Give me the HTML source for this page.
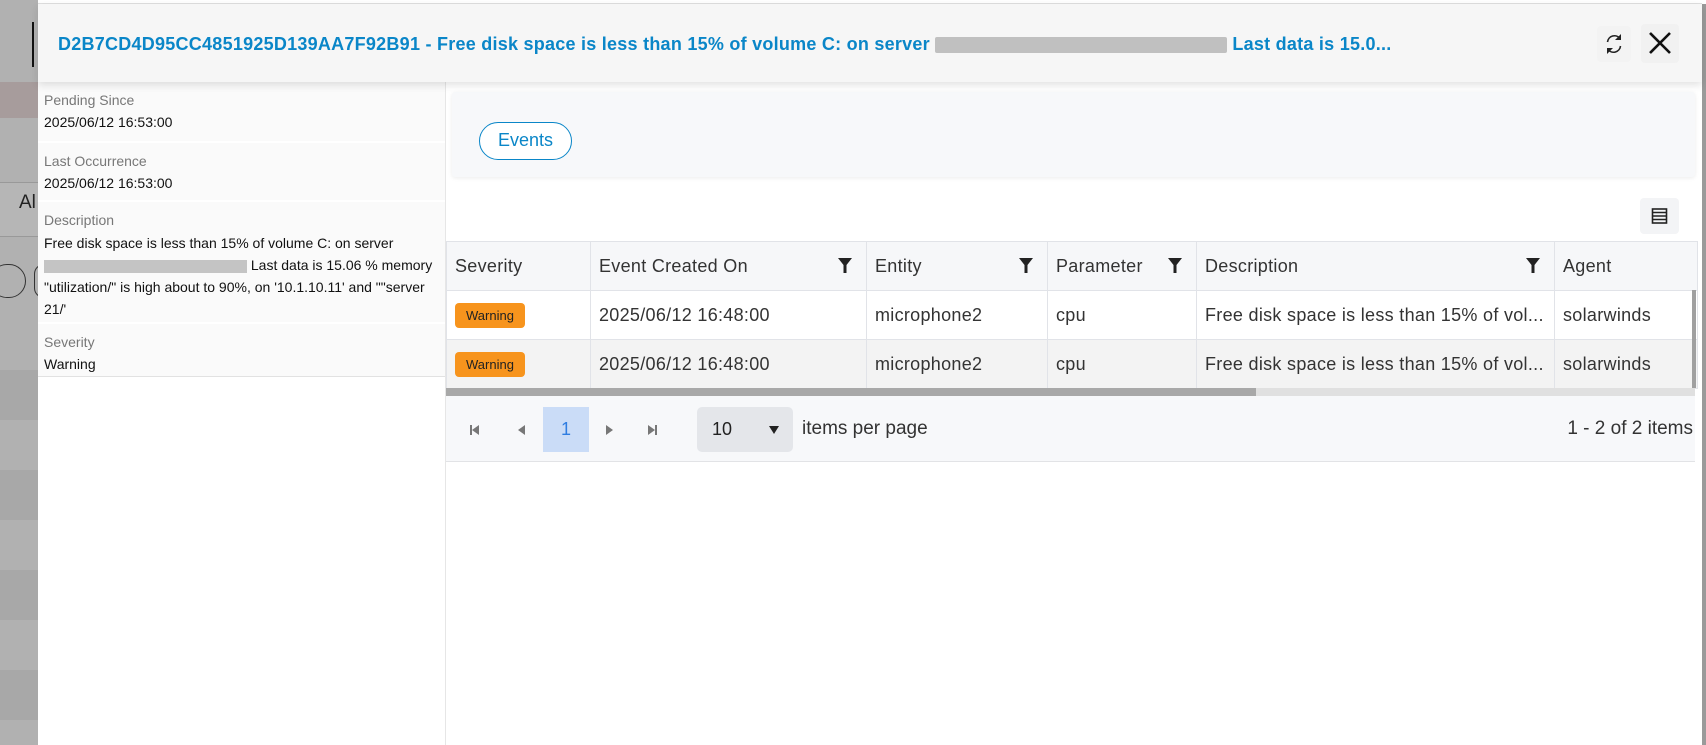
<!DOCTYPE html>
<html><head><meta charset="utf-8"><style>
*{box-sizing:border-box;margin:0;padding:0}
body{width:1706px;height:745px;overflow:hidden;background:#fff;font-family:"Liberation Sans",sans-serif;position:relative}
.abs{position:absolute}
.bg{left:0;top:0;width:38px;height:745px;background:#b1b1b1}
.modal{left:38px;top:4px;width:1664px;height:741px;background:#fff}
.hdr{left:38px;top:4px;width:1664px;height:78px;background:#f6f6f6;box-shadow:0 3px 8px rgba(0,0,0,.12);z-index:3}
.title{left:58px;top:34px;font-size:18px;font-weight:bold;color:#0a86c8;white-space:nowrap;letter-spacing:0.25px}
.redact{display:inline-block;width:292px;height:16px;background:#c0c0c0;vertical-align:middle;border-radius:2px}
.lp{left:38px;top:82px;width:408px;height:663px;border-right:1px solid #e6e6e6;background:#fff}
.sec{position:absolute;left:0;width:407px;background:#fafafa;padding:0 6px;font-size:14px;color:#111}
.sec .l{color:#777;margin-bottom:5px;margin-top:10px}
.sec div{line-height:17px}
.card{left:452px;top:92px;width:1243px;height:85px;background:#f7f8fa;box-shadow:0 1px 4px rgba(0,0,0,.08);border-radius:3px}
.evbtn{left:479px;top:122px;width:93px;height:38px;border:1.5px solid #0a86c8;border-radius:19px;color:#0a86c8;font-size:18px;text-align:center;line-height:35px;background:#fff}
table{position:absolute;left:446px;top:241px;border-collapse:collapse;font-size:18px;color:#333;letter-spacing:0.3px;table-layout:fixed}
td,th{border:1px solid #e1e3e8;height:49px;padding:0 8px;text-align:left;font-weight:normal;white-space:nowrap;position:relative;overflow:hidden}
th{background:#f6f7f9;height:49px}
tr.r2 td{background:#f3f3f3}
.flt{position:absolute;right:14px;top:16px}
.warn{display:inline-block;background:#f7941d;color:#222;font-size:13px;padding:0 11px;height:25px;line-height:25px;border-radius:4px;letter-spacing:0}
</style></head><body>
<div class="abs bg"></div>
<div class="abs" style="left:0;top:82px;width:38px;height:36px;background:#a79c9c"></div>
<div class="abs" style="left:0;top:182px;width:38px;height:55px;background:#b6b6b6;border-top:1px solid #999;border-bottom:1px solid #999"></div>
<div class="abs" style="left:19px;top:192px;font-size:19px;color:#222">Al</div>
<div class="abs" style="left:-10px;top:264px;width:36px;height:34px;border:1.5px solid #333;border-radius:17px"></div>
<div class="abs" style="left:34px;top:264px;width:20px;height:34px;border:1.5px solid #333;border-radius:17px"></div>
<div class="abs" style="left:0;top:370px;width:38px;height:50px;background:#a8a8a8"></div>
<div class="abs" style="left:0;top:470px;width:38px;height:50px;background:#a8a8a8"></div>
<div class="abs" style="left:0;top:570px;width:38px;height:50px;background:#a8a8a8"></div>
<div class="abs" style="left:0;top:670px;width:38px;height:50px;background:#a8a8a8"></div>
<div class="abs" style="left:32px;top:22px;width:1.5px;height:45px;background:#111"></div>
<div class="abs modal"></div>
<div class="abs" style="left:38px;top:3px;width:1664px;height:1px;background:#e0e0e0"></div>
<div class="abs" style="left:1702px;top:4px;width:4px;height:741px;background:#9a9a9a"></div>
<div class="abs hdr">
</div>
<div class="abs title" style="z-index:4">D2B7CD4D95CC4851925D139AA7F92B91 - Free disk space is less than 15% of volume C: on server <span class="redact"></span> Last data is 15.0...</div>
<div class="abs" style="left:1597px;top:26px;width:34px;height:36px;background:#f3f3f3;border-radius:4px;z-index:4">
<svg width="34" height="36" viewBox="0 0 34 36"><g fill="none" stroke="#222" stroke-width="1.6"><path d="M10.5 16a7 7 0 0 1 12.5-3.5"/><path d="M23.5 20a7 7 0 0 1-12.5 3.5"/></g><path d="M24 8v6h-6z" fill="#222"/><path d="M10 28v-6h6z" fill="#222"/></svg></div>
<div class="abs" style="left:1641px;top:24px;width:38px;height:39px;background:#f1f1f1;border-radius:4px;z-index:4">
<svg width="38" height="39" viewBox="0 0 38 39"><path d="M9 9L29 29M29 9L9 29" stroke="#111" stroke-width="2.6"/></svg></div>

<div class="abs lp"></div>
<div class="sec" style="top:82px;height:59px;left:38px"><div class="l">Pending Since</div><div>2025/06/12 16:53:00</div></div>
<div class="sec" style="top:143px;height:57px;left:38px"><div class="l">Last Occurrence</div><div>2025/06/12 16:53:00</div></div>
<div class="sec" style="top:202px;height:120px;left:38px"><div class="l">Description</div><div style="line-height:22px;margin-top:-2px">Free disk space is less than 15% of volume C: on server<br><span style="display:inline-block;width:203px;height:13px;background:#c4c4c4;vertical-align:middle"></span> Last data is 15.06 % memory<br>"utilization/" is high about to 90%, on '10.1.10.11' and ""server<br>21/'</div></div>
<div class="sec" style="top:324px;height:53px;left:38px;border-bottom:1px solid #e2e2e2"><div class="l">Severity</div><div>Warning</div></div>

<div class="abs card"></div>
<div class="abs evbtn">Events</div>
<div class="abs" style="left:1640px;top:198px;width:39px;height:36px;background:#f3f4f6;border-radius:4px">
<svg width="39" height="36" viewBox="0 0 39 36"><rect x="12.5" y="11" width="14" height="14" fill="none" stroke="#222" stroke-width="1.6"/><path d="M12.5 14.5h14M12.5 18h14M12.5 21.5h14" stroke="#222" stroke-width="1.6"/></svg></div>

<table>
<colgroup><col style="width:144px"><col style="width:276px"><col style="width:181px"><col style="width:149px"><col style="width:358px"><col style="width:143px"></colgroup>
<tr><th>Severity</th><th>Event Created On<svg class="flt" width="14" height="15" viewBox="0 0 14 15"><path d="M0 0h14L8.5 7v8h-3V7z" fill="#222"/></svg></th><th>Entity<svg class="flt" width="14" height="15" viewBox="0 0 14 15"><path d="M0 0h14L8.5 7v8h-3V7z" fill="#222"/></svg></th><th>Parameter<svg class="flt" width="14" height="15" viewBox="0 0 14 15"><path d="M0 0h14L8.5 7v8h-3V7z" fill="#222"/></svg></th><th>Description<svg class="flt" width="14" height="15" viewBox="0 0 14 15"><path d="M0 0h14L8.5 7v8h-3V7z" fill="#222"/></svg></th><th>Agent</th></tr>
<tr><td><span class="warn">Warning</span></td><td>2025/06/12 16:48:00</td><td>microphone2</td><td>cpu</td><td>Free disk space is less than 15% of vol...</td><td>solarwinds</td></tr>
<tr class="r2"><td><span class="warn">Warning</span></td><td>2025/06/12 16:48:00</td><td>microphone2</td><td>cpu</td><td>Free disk space is less than 15% of vol...</td><td>solarwinds</td></tr>
</table>
<div class="abs" style="left:1692px;top:290px;width:4px;height:98px;background:#a0a0a0"></div>
<div class="abs" style="left:446px;top:388px;width:1249px;height:8px;background:#e0e0e0"></div>
<div class="abs" style="left:446px;top:388px;width:810px;height:8px;background:#a8a8a8"></div>
<div class="abs" style="left:446px;top:396px;width:1249px;height:66px;background:#f7f8fa;border-bottom:1px solid #e2e3e6"></div>
<svg class="abs" style="left:468px;top:423px" width="200" height="14" viewBox="0 0 200 14"><g fill="#777"><rect x="2" y="2" width="2" height="10"/><path d="M11 2v10L4 7z"/><path d="M57 2v10L50 7z"/><path d="M138 2v10l7-5z"/><path d="M180 2v10l7-5z"/><rect x="187" y="2" width="2" height="10"/></g></svg>
<div class="abs" style="left:543px;top:407px;width:46px;height:45px;background:#cadcf7;color:#2f7de1;font-size:18px;text-align:center;line-height:45px">1</div>
<div class="abs" style="left:697px;top:407px;width:96px;height:45px;background:#e4e6ea;border-radius:5px;font-size:18px;color:#222;line-height:45px;padding-left:15px">10<svg style="position:absolute;left:72px;top:19px" width="10" height="8" viewBox="0 0 10 8"><path d="M0 0h10L5 8z" fill="#222"/></svg></div>
<div class="abs" style="left:802px;top:418px;font-size:19px;color:#333">items per page</div>
<div class="abs" style="right:13px;top:418px;font-size:19px;color:#333">1 - 2 of 2 items</div>
</body></html>
